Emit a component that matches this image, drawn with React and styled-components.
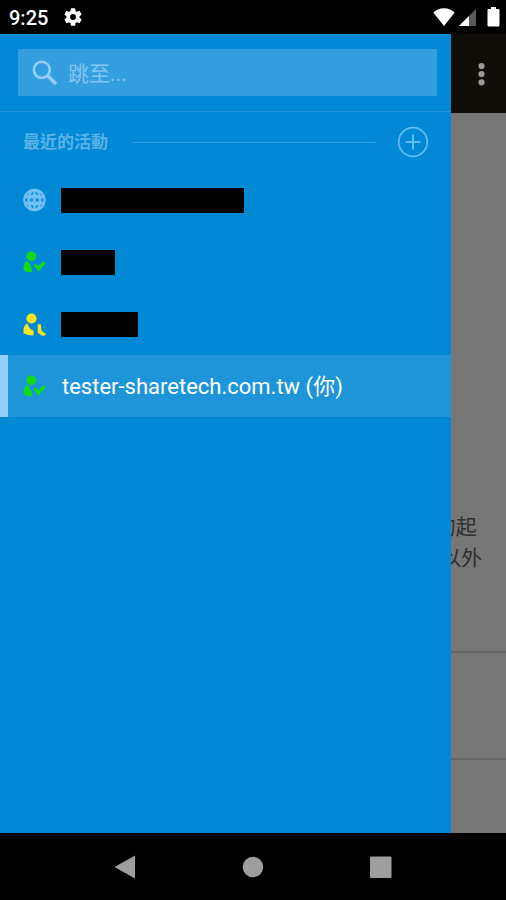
import React from "react";
import styled, { createGlobalStyle } from "styled-components";

const GlobalStyle = createGlobalStyle`
  * {
    box-sizing: border-box;
  }

  body {
    margin: 0;
    background: #000;
    font-family: Roboto, "Noto Sans CJK TC", sans-serif;
  }

  button {
    border: 0;
    padding: 0;
    background: none;
    font: inherit;
    color: inherit;
    cursor: pointer;
  }

  svg {
    display: block;
    flex: none;
  }
`;

const Phone = styled.div`
  display: flex;
  flex-direction: column;
  min-height: 100vh;
`;

const StatusBar = styled.header`
  display: flex;
  align-items: center;
  height: 34px;
  padding-left: 9px;
  color: #fff;
`;

const Clock = styled.time`
  margin: 2px 14px 0 0;
  font-size: 20px;
  font-weight: 500;
  line-height: 24px;
`;

const StatusIcons = styled.div`
  display: flex;
  align-items: center;
  gap: 4px;
  margin-left: auto;
`;

const Screen = styled.div`
  position: relative;
  flex: 1;
  display: flex;
  flex-direction: column;
  background: #777;
`;

const AppBar = styled.div`
  display: flex;
  align-items: center;
  justify-content: flex-end;
  height: 79px;
  padding-right: 10px;
  background: #110d09;
`;

const MoreButton = styled.button`
  color: #9b9a99;
`;

const Page = styled.main`
  flex: 1;
  display: flex;
  flex-direction: column;
`;

const Message = styled.p`
  flex: 1;
  display: flex;
  flex-direction: column;
  justify-content: flex-end;
  margin: 0;
  padding: 0 24px 77px;
  font-size: 21px;
  line-height: 31px;
  color: #2f2f2f;
  text-align: right;
  white-space: pre;
`;

const PageRow = styled.div`
  height: ${(props) => props.$height}px;
  border-top: 2px solid #666;
`;

const Drawer = styled.aside`
  position: absolute;
  top: 0;
  bottom: 0;
  left: 0;
  width: calc(100% - 55px);
  background: #0289d6;
  color: #84c6f2;
`;

const SearchArea = styled.div`
  padding: 15px 14px 15px 18px;
  border-bottom: 1px solid #2199de;
`;

const SearchBox = styled.label`
  display: flex;
  align-items: center;
  gap: 10px;
  height: 47px;
  padding: 0 14px;
  background: #349fdf;
  color: #93cff8;
`;

const SearchInput = styled.input`
  flex: 1;
  min-width: 0;
  border: 0;
  padding: 4px 0 0;
  outline: none;
  background: none;
  font: inherit;
  font-size: 21px;
  line-height: 31px;
  color: #fff;

  &::placeholder {
    color: #84c6f2;
    opacity: 1;
  }
`;

const SectionHeader = styled.div`
  display: flex;
  align-items: center;
  height: 57px;
  padding: 3px 22px 0 23px;
`;

const SectionTitle = styled.h2`
  margin: 0;
  font-size: 17px;
  font-weight: 700;
  line-height: 24px;
  color: #5bb2e8;
`;

const Rule = styled.div`
  flex: 1;
  height: 1px;
  margin: 0 21px 0 24px;
  background: #2a9cdf;
`;

const AddButton = styled.button`
  color: #62bbf3;
`;

const ChannelList = styled.ul`
  margin: 0;
  padding: 0;
  list-style: none;
`;

const Channel = styled.button`
  display: flex;
  align-items: center;
  gap: 14px;
  width: 100%;
  height: 62px;
  padding-left: ${(props) => (props.$active ? 15 : 23)}px;
  border-left: ${(props) => (props.$active ? "8px solid #94ceff" : "0")};
  background: ${(props) => (props.$active ? "#1e95d9" : "none")};
  color: #fff;
  font-size: 22px;
  line-height: 32px;
  text-align: left;
`;

const ChannelName = styled.span`
  padding: 2px 0 0 1px;
`;

const HiddenName = styled.span`
  width: ${(props) => props.$width}px;
  height: 25px;
  background: #000;
`;

const NavBar = styled.nav`
  display: flex;
  align-items: center;
  justify-content: center;
  gap: 104px;
  height: 67px;
  color: #9e9e9e;
`;

function GearIcon() {
  return (
    <svg width="22" height="22" viewBox="0 0 24 24" fill="currentColor">
      <path d="M19.14 12.94c.04-.3.06-.61.06-.94 0-.32-.02-.64-.07-.94l2.03-1.58a.49.49 0 0 0 .12-.61l-1.92-3.32a.49.49 0 0 0-.59-.22l-2.39.96c-.5-.38-1.03-.7-1.62-.94l-.36-2.54a.48.48 0 0 0-.48-.41h-3.84a.48.48 0 0 0-.47.41l-.36 2.54c-.59.24-1.13.57-1.62.94l-2.39-.96a.48.48 0 0 0-.59.22L2.74 8.87a.48.48 0 0 0 .12.61l2.03 1.58c-.05.3-.09.63-.09.94s.02.64.07.94l-2.03 1.58a.49.49 0 0 0-.12.61l1.92 3.32c.12.22.37.29.59.22l2.39-.96c.5.38 1.03.7 1.62.94l.36 2.54c.05.24.24.41.48.41h3.84c.24 0 .44-.17.47-.41l.36-2.54c.59-.24 1.13-.56 1.62-.94l2.39.96c.22.08.47 0 .59-.22l1.92-3.32a.48.48 0 0 0-.12-.61l-2.01-1.58zM12 15.2A3.2 3.2 0 1 1 12 8.800a3.2 3.2 0 0 1 0 6.400z" />
    </svg>
  );
}

function WifiIcon() {
  return (
    <svg width="22" height="18" viewBox="0 0 22 18" fill="currentColor">
      <path d="M11 18L0.3 4.6C3 1.9 6.7 0.3 11 0.3s8 1.6 10.700 4.300z" />
    </svg>
  );
}

function SignalIcon() {
  return (
    <svg width="17" height="18" viewBox="0 0 17 18" fill="currentColor">
      <path d="M0 18L17 1v17z" opacity="0.35" />
      <path d="M0 18L10 8v10z" />
    </svg>
  );
}

function BatteryIcon() {
  return (
    <svg width="26" height="20" viewBox="0 0 26 20" fill="currentColor">
      <path d="M11 0h5v2h2.500q1 0 1 1v15.500q0 1-1 1h-10q-1 0-1-1V3q0-1 1-1H11z" />
    </svg>
  );
}

function MoreIcon() {
  return (
    <svg width="30" height="30" viewBox="0 0 30 30" fill="currentColor">
      <circle cx="15.500" cy="7" r="3.100" />
      <circle cx="15.500" cy="15" r="3.100" />
      <circle cx="15.500" cy="23.300" r="3.100" />
    </svg>
  );
}

function SearchIcon() {
  return (
    <svg width="26" height="26" viewBox="0 0 26 26" fill="none" stroke="currentColor">
      <circle cx="9.800" cy="9.800" r="8" strokeWidth="2.600" />
      <path d="M15.500 15.500L24 24" strokeWidth="3.400" />
    </svg>
  );
}

function PlusCircleIcon() {
  return (
    <svg width="32" height="32" viewBox="0 0 32 32" fill="none" stroke="currentColor">
      <circle cx="16" cy="16" r="14.300" strokeWidth="1.800" />
      <path d="M16 8.500v15M8.500 16h15" strokeWidth="2" />
    </svg>
  );
}

function GlobeIcon() {
  return (
    <svg width="24" height="24" viewBox="0 0 24 24" fill="none">
      <circle cx="11.500" cy="12" r="11.300" fill="#6fc0f3" />
      <g fill="#0f8ed8">
        <path d="M10.300 3.500v3.300H7.300Q8.400 4.500 10.300 3.500zM12.700 3.500v3.300h3Q14.600 4.500 12.700 3.500z" />
        <path d="M5.600 5L3.800 7.200h1.400zM17.400 5l1.800 2.200h-1.400z" />
        <path d="M2.300 10.400h2.400v3.200H2.300zM6.900 10.400h3.200v3.200H6.900zM12.600 10.400h3.200v3.200h-3.200zM18.300 10.400h2.400v3.200h-2.400z" />
        <path d="M10.300 20.500v-3.300H7.300Q8.400 19.500 10.300 20.500zM12.700 20.500v-3.300h3Q14.600 19.500 12.700 20.500z" />
        <path d="M5.600 19L3.800 16.800h1.400zM17.400 19l1.800-2.200h-1.400z" />
      </g>
    </svg>
  );
}

function OnlineIcon() {
  return (
    <svg width="24" height="24" viewBox="0 0 24 24" fill="#14da14">
      <circle cx="8.300" cy="6.300" r="4.900" />
      <path d="M3.400 11.200Q0 14 .5 18.600q.2 2.200 2.200 3 3 1 6.800.6L8.300 17.500Q7.300 15.200 5.500 12.200 4.500 10.800 3.400 11.200z" />
      <path d="M10.600 15.300l1.800-1.500 3.100 2.300 4.600-4.900 2.700 2.100-7.300 8.300z" />
    </svg>
  );
}

function AwayIcon() {
  return (
    <svg width="24" height="24" viewBox="0 0 24 24" fill="#fbe31f">
      <circle cx="8.500" cy="6.500" r="5.100" />
      <path d="M4.200 11.300Q.2 14.500.5 18v3.200q4.200 2.300 10 2.300l.2-4.600q-3.600-1-5-4.400z" />
      <path d="M14.700 12.300h3.200l.7 6.400 4.400 3.200-1.600 1.900h-2.400l-4.300-3.400z" />
    </svg>
  );
}

const statusIcons = {
  public: <GlobeIcon />,
  online: <OnlineIcon />,
  away: <AwayIcon />,
};

const channels = [
  { id: 1, status: "public", width: 183 },
  { id: 2, status: "online", width: 54 },
  { id: 3, status: "away", width: 77 },
  { id: 4, status: "online", name: "tester-sharetech.com.tw (你)" },
];

function ChannelItem({ status, name, width }) {
  return (
    <li>
      <Channel type="button" $active={Boolean(name)}>
        {statusIcons[status]}
        {name ? <ChannelName>{name}</ChannelName> : <HiddenName $width={width} />}
      </Channel>
    </li>
  );
}

function App() {
  return (
    <Phone>
      <GlobalStyle />
      <StatusBar>
        <Clock>9:25</Clock>
        <GearIcon />
        <StatusIcons>
          <WifiIcon />
          <SignalIcon />
          <BatteryIcon />
        </StatusIcons>
      </StatusBar>
      <Screen>
        <AppBar>
          <MoreButton type="button" aria-label="更多">
            <MoreIcon />
          </MoreButton>
        </AppBar>
        <Page>
          <Message>
            <span>{"的起 "}</span>
            <span>以外</span>
          </Message>
          <PageRow $height={107} />
          <PageRow $height={75} />
        </Page>
        <Drawer>
          <SearchArea>
            <SearchBox>
              <SearchIcon />
              <SearchInput type="text" placeholder="跳至..." aria-label="跳至" />
            </SearchBox>
          </SearchArea>
          <SectionHeader>
            <SectionTitle>最近的活動</SectionTitle>
            <Rule />
            <AddButton type="button" aria-label="新增">
              <PlusCircleIcon />
            </AddButton>
          </SectionHeader>
          <ChannelList>
            {channels.map((channel) => (
              <ChannelItem key={channel.id} {...channel} />
            ))}
          </ChannelList>
        </Drawer>
      </Screen>
      <NavBar>
        <button type="button" aria-label="返回">
          <svg width="24" height="24" viewBox="0 0 24 24" fill="currentColor">
            <path d="M1.500 12L22 .5v23z" />
          </svg>
        </button>
        <button type="button" aria-label="主畫面">
          <svg width="24" height="24" viewBox="0 0 24 24" fill="currentColor">
            <circle cx="12" cy="12" r="10.300" />
          </svg>
        </button>
        <button type="button" aria-label="概覽">
          <svg width="24" height="24" viewBox="0 0 24 24" fill="currentColor">
            <rect x="1" y="1.500" width="21.500" height="21.500" rx="1" />
          </svg>
        </button>
      </NavBar>
    </Phone>
  );
}

export default App;
